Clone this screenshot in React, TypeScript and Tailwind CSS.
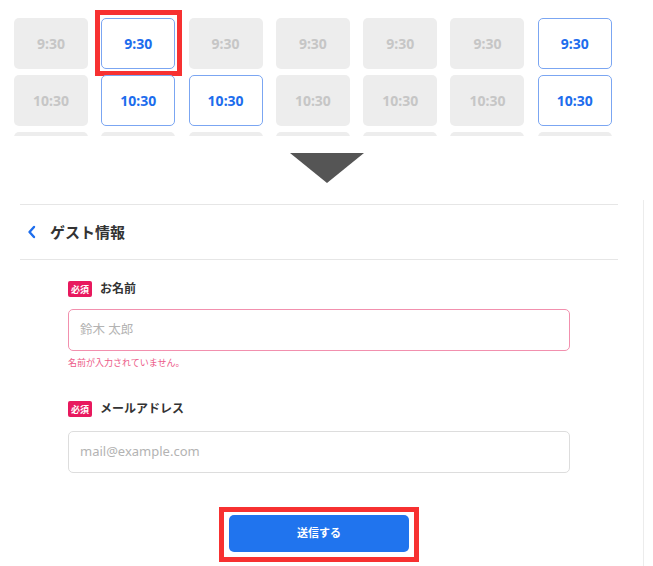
import React from "react";

type Slot = { label: string; open: boolean };

const rows: Slot[][] = [
  [false, true, false, false, false, false, true].map((open) => ({ label: "9:30", open })),
  [false, true, true, false, false, false, true].map((open) => ({ label: "10:30", open })),
  // third row is only peeking in from below, its labels are out of view
  [false, false, false, false, false, false, false].map((open) => ({ label: "", open })),
];

function SlotCell({ slot, marked }: { slot: Slot; marked?: boolean }) {
  return (
    <div className="relative">
      <div
        className={
          slot.open
            ? "h-[51px] rounded-[5px] border border-[#7ba6f2] bg-white flex items-center justify-center text-[14px] font-bold text-[#1d6ded]"
            : "h-[51px] rounded-[5px] bg-[#ededed] flex items-center justify-center text-[14px] font-bold text-[#c6c6c6]"
        }
      >
        {slot.label}
      </div>
      {marked && (
        <div className="absolute left-[-6px] right-[-7px] top-[-8px] bottom-[-7px] border-[5px] border-[#f73131] pointer-events-none" />
      )}
    </div>
  );
}

function Required() {
  return (
    <span className="inline-flex items-center justify-center w-[24px] h-[16px] rounded-[2px] bg-[#e8195e] text-white text-[9px] font-bold leading-none">
      必須
    </span>
  );
}

export default function App() {
  return (
    <div
      className="w-[653px] h-[566px] overflow-hidden bg-white text-[#333]"
      style={{ fontFamily: '"Noto Sans", "Noto Sans CJK JP", sans-serif' }}
    >
      {/* time slots */}
      <div className="h-[136px] overflow-hidden pt-[18px] pl-[14px]">
        <div className="grid grid-cols-[repeat(7,74px)] gap-x-[13.3px] gap-y-[6px]">
          {rows.map((row, r) =>
            row.map((slot, c) => (
              <SlotCell key={`${r}-${c}`} slot={slot} marked={r === 0 && c === 1} />
            ))
          )}
        </div>
      </div>

      {/* arrow */}
      <div className="flex justify-center mt-[17px]">
        <svg width="74" height="30" viewBox="0 0 74 30">
          <polygon points="0,0 74,0 37,30" fill="#555555" />
        </svg>
      </div>

      {/* guest form */}
      <div className="mt-[17px] w-[644px] h-[400px] border-r border-[#ececec] pt-[4px] pl-[20px] pr-[25px]">
        <div className="h-[56px] border-y border-[#e6e6e6] flex items-center pl-[7px] gap-[13px]">
          <svg width="10" height="14" viewBox="0 0 10 14">
            <polyline points="7,2 2.5,7 7,12" fill="none" stroke="#1d6ded" strokeWidth="2.4" strokeLinecap="round" strokeLinejoin="round" />
          </svg>
          <span className="text-[15px] font-bold text-[#333]">ゲスト情報</span>
        </div>

        <div className="pl-[48px] w-[550px]">
          <div className="mt-[21px] flex items-center gap-[8px] h-[16px]">
            <Required />
            <span className="text-[12px] font-bold text-[#333]">お名前</span>
          </div>
          <div className="mt-[12px] h-[42px] rounded-[5px] border border-[#f290ae] flex items-center pl-[11px] text-[12.5px] text-[#b3b3b3]">
            鈴木 太郎
          </div>
          <div className="mt-[6px] text-[9px] leading-[12px] text-[#ec5a88]">名前が入力されていません。</div>

          <div className="mt-[32px] flex items-center gap-[8px] h-[16px]">
            <Required />
            <span className="text-[12px] font-bold text-[#333]">メールアドレス</span>
          </div>
          <div className="mt-[14px] h-[42px] rounded-[5px] border border-[#dddddd] flex items-center pl-[11px] text-[13px] text-[#b3b3b3]">
            mail@example.com
          </div>

          <div className="mt-[42px] flex justify-center">
            <div className="relative">
              <div className="w-[180px] h-[37px] rounded-[5px] bg-[#2074ee] flex items-center justify-center text-white text-[11px] font-bold">
                送信する
              </div>
              <div className="absolute left-[-10px] right-[-10px] top-[-8px] bottom-[-10px] border-[5px] border-[#f73131] pointer-events-none" />
            </div>
          </div>
        </div>
      </div>
    </div>
  );
}
